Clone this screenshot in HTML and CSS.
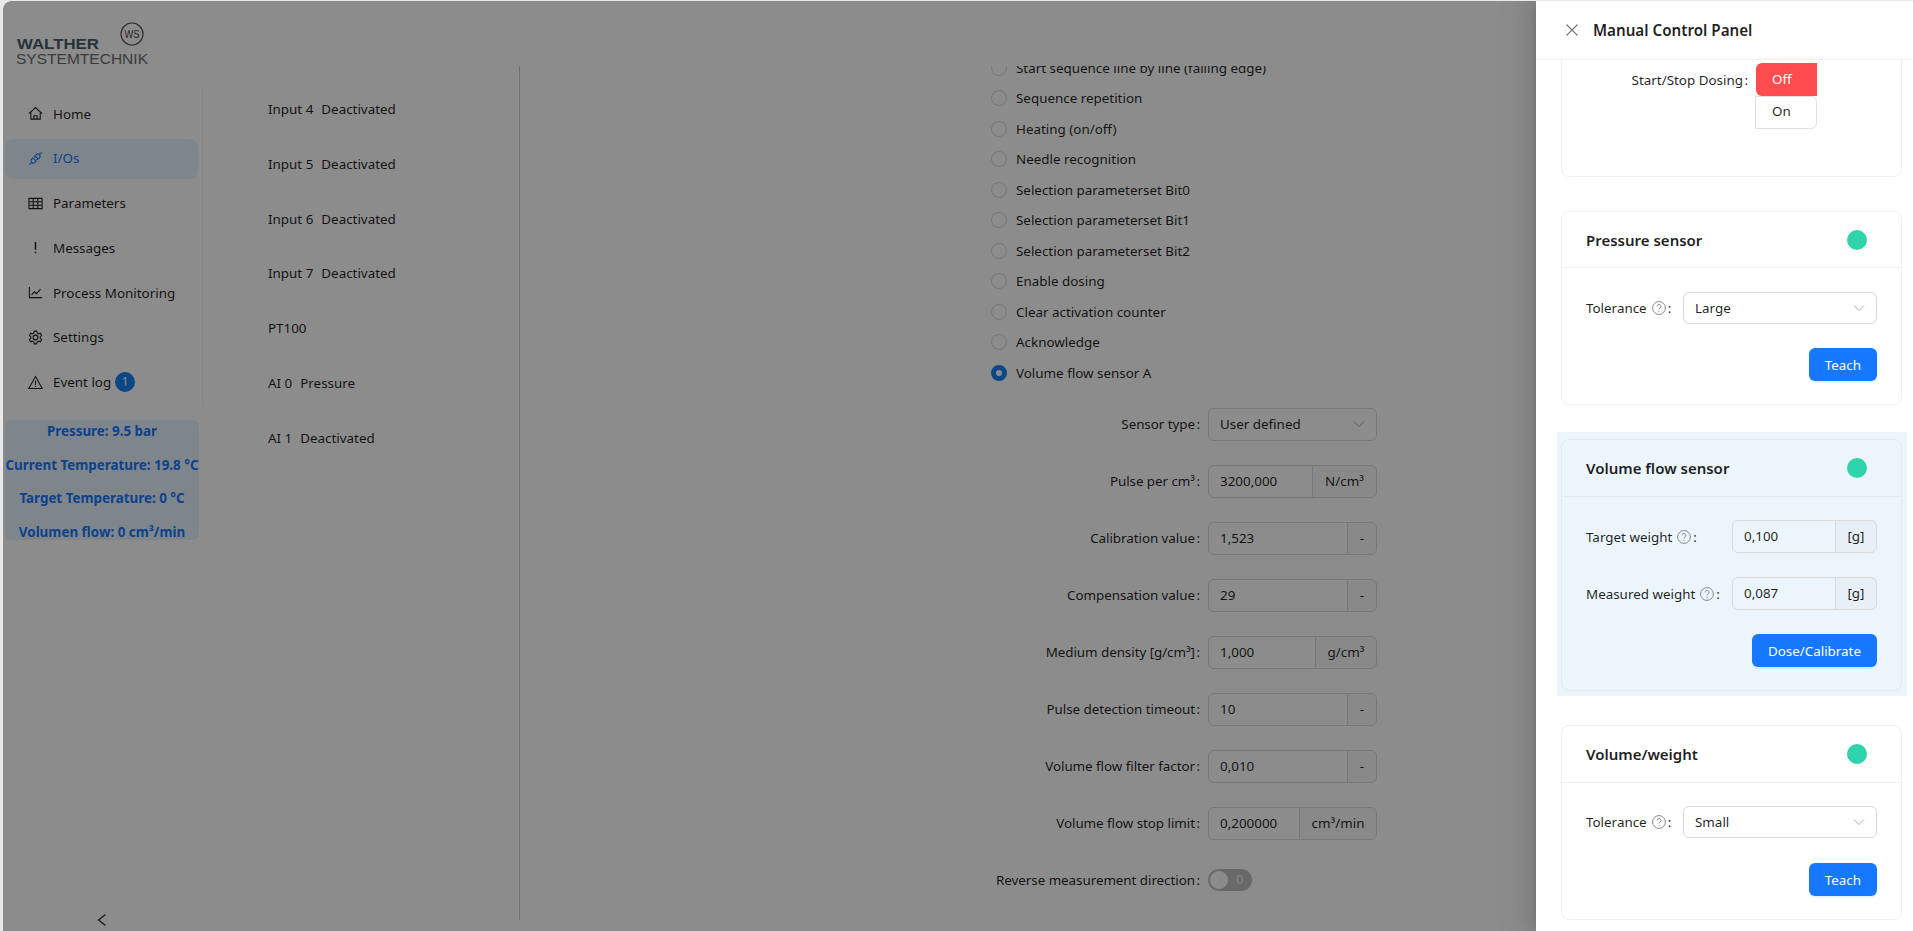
FILE: index.html
```html
<!DOCTYPE html>
<html lang="en">
<head>
<meta charset="utf-8">
<title>Manual Control Panel</title>
<link rel="stylesheet" href="styles.css">
</head>
<body>
<div class="frame">
<div class="app">
  <aside class="sidebar">
    <div class="logo">
      <svg width="150" height="70" viewBox="0 0 150 70">
        <circle class="logo-ring" cx="129" cy="33" r="11"/>
        <text class="logo-ws" x="129" y="37" text-anchor="middle" textLength="15" lengthAdjust="spacingAndGlyphs">WS</text>
        <text class="logo-a" x="14" y="48" textLength="82" lengthAdjust="spacingAndGlyphs">WALTHER</text>
        <text class="logo-b" x="13" y="63" textLength="132" lengthAdjust="spacingAndGlyphs">SYSTEMTECHNIK</text>
      </svg>
    </div>
    <nav class="nav">
      <a class="nav-item">
        <svg class="icon" viewBox="0 0 16 16"><path d="M1 8.2 8 1.6l7 6.6M3 7v7h10V7M6.3 14v-3.6h3.4V14"/></svg>
        <span>Home</span>
      </a>
      <a class="nav-item active">
        <svg class="icon" viewBox="0 0 16 16"><path d="M1.5 14.5l2.2-2.2M14.5 1.5l-2.2 2.2M5.2 7.4 3.9 8.7a2.4 2.4 0 0 0 3.4 3.4l1.3-1.3zM10.8 8.6l1.3-1.3a2.4 2.4 0 0 0-3.4-3.4L7.4 5.2zM6.4 6.8 8 5.2M9.2 9.6l1.6-1.6"/></svg>
        <span>I/Os</span>
      </a>
      <a class="nav-item">
        <svg class="icon" viewBox="0 0 16 16"><path d="M1 2.5h14v11H1zM1 6.2h14M1 9.8h14M5.6 2.5v11M10.4 2.5v11"/></svg>
        <span>Parameters</span>
      </a>
      <a class="nav-item">
        <svg class="icon icon-bold" viewBox="0 0 16 16"><path d="M8 2v8.5M8 12.6v1.6"/></svg>
        <span>Messages</span>
      </a>
      <a class="nav-item">
        <svg class="icon" viewBox="0 0 16 16"><path d="M1.5 2v11.5h13.5M3.8 10.5l3-3.2 2.2 2 4.4-4.8"/></svg>
        <span>Process Monitoring</span>
      </a>
      <a class="nav-item">
        <svg class="icon" viewBox="0 0 16 16"><circle cx="8" cy="8" r="2.5"/><path d="M6.7 1.2h2.6l.4 2 1.5.9 2-.7 1.3 2.3-1.5 1.4v1.8l1.5 1.4-1.3 2.3-2-.7-1.5.9-.4 2H6.7l-.4-2-1.5-.9-2 .7-1.3-2.3 1.5-1.4V7.1L1.5 5.7l1.3-2.3 2 .7 1.5-.9z"/></svg>
        <span>Settings</span>
      </a>
      <a class="nav-item">
        <svg class="icon" viewBox="0 0 16 16"><path d="M8 1.6 15.2 14.4H.8zM8 6v4.6M8 11.6v1.3"/></svg>
        <span>Event log</span><span class="badge">1</span>
      </a>
    </nav>
    <div class="status">
      <p>Pressure: 9.5 bar</p>
      <p>Current Temperature: 19.8 °C</p>
      <p>Target Temperature: 0 °C</p>
      <p>Volumen flow: 0 cm³/min</p>
    </div>
    <button class="collapse" type="button">
      <svg width="10" height="14" viewBox="0 0 10 14"><path d="M8.5 1.5 1.5 7l7 5.5"/></svg>
    </button>
  </aside>

  <section class="channels">
    <div class="channel"><span>Input 4</span><span>Deactivated</span></div>
    <div class="channel"><span>Input 5</span><span>Deactivated</span></div>
    <div class="channel"><span>Input 6</span><span>Deactivated</span></div>
    <div class="channel"><span>Input 7</span><span>Deactivated</span></div>
    <div class="channel"><span>PT100</span></div>
    <div class="channel"><span>AI 0</span><span>Pressure</span></div>
    <div class="channel"><span>AI 1</span><span>Deactivated</span></div>
  </section>

  <main class="main">
    <div class="radios">
      <label class="radio"><i class="radio-dot"></i>Start sequence line by line (falling edge)</label>
      <label class="radio"><i class="radio-dot"></i>Sequence repetition</label>
      <label class="radio"><i class="radio-dot"></i>Heating (on/off)</label>
      <label class="radio"><i class="radio-dot"></i>Needle recognition</label>
      <label class="radio"><i class="radio-dot"></i>Selection parameterset Bit0</label>
      <label class="radio"><i class="radio-dot"></i>Selection parameterset Bit1</label>
      <label class="radio"><i class="radio-dot"></i>Selection parameterset Bit2</label>
      <label class="radio"><i class="radio-dot"></i>Enable dosing</label>
      <label class="radio"><i class="radio-dot"></i>Clear activation counter</label>
      <label class="radio"><i class="radio-dot"></i>Acknowledge</label>
      <label class="radio"><i class="radio-dot checked"></i>Volume flow sensor A</label>
    </div>
    <div class="form">
      <div class="form-label">Sensor type<b>:</b></div>
      <div class="select tall"><span>User defined</span><svg class="chev" viewBox="0 0 12 8"><path d="M1 1.5 6 6.5l5-5"/></svg></div>

      <div class="form-label">Pulse per cm³<b>:</b></div>
      <div class="input-group"><span class="val">3200,000</span><span class="addon w-n">N/cm³</span></div>

      <div class="form-label">Calibration value<b>:</b></div>
      <div class="input-group"><span class="val">1,523</span><span class="addon w-d">-</span></div>

      <div class="form-label">Compensation value<b>:</b></div>
      <div class="input-group"><span class="val">29</span><span class="addon w-d">-</span></div>

      <div class="form-label">Medium density [g/cm³]<b>:</b></div>
      <div class="input-group"><span class="val">1,000</span><span class="addon w-g">g/cm³</span></div>

      <div class="form-label">Pulse detection timeout<b>:</b></div>
      <div class="input-group"><span class="val">10</span><span class="addon w-d">-</span></div>

      <div class="form-label">Volume flow filter factor<b>:</b></div>
      <div class="input-group"><span class="val">0,010</span><span class="addon w-d">-</span></div>

      <div class="form-label">Volume flow stop limit<b>:</b></div>
      <div class="input-group"><span class="val">0,200000</span><span class="addon w-c">cm³/min</span></div>

      <div class="form-label">Reverse measurement direction<b>:</b></div>
      <div class="toggle-cell"><div class="toggle"><i class="knob"></i><span>0</span></div></div>
    </div>
  </main>

  <div class="mask"></div>

  <aside class="drawer">
    <header class="drawer-head">
      <svg class="close" viewBox="0 0 12 12"><path d="M.5.5l11 11M11.5.5l-11 11"/></svg>
      <h2>Manual Control Panel</h2>
    </header>
    <div class="drawer-body">
      <section class="card card-clipped">
        <div class="dosing">
          <div class="dosing-label">Start/Stop Dosing<b>:</b></div>
          <div class="dosing-btns">
            <span class="seg seg-off">Off</span>
            <span class="seg seg-on">On</span>
          </div>
        </div>
      </section>

      <section class="card">
        <div class="card-head"><h3>Pressure sensor</h3><i class="led"></i></div>
        <div class="card-body">
          <div class="field">
            <div class="field-label w-tol">Tolerance<svg class="help" viewBox="0 0 14 14"><circle cx="7" cy="7" r="6.4"/><path d="M5.1 5.4a1.9 1.9 0 1 1 2.9 1.6c-.7.4-1 .8-1 1.5M7 9.9v1"/></svg><b>:</b></div>
            <div class="select grow"><span>Large</span><svg class="chev" viewBox="0 0 12 8"><path d="M1 1.5 6 6.5l5-5"/></svg></div>
          </div>
          <div class="actions"><button class="btn" type="button">Teach</button></div>
        </div>
      </section>

      <div class="highlight">
        <section class="card card-flow">
          <div class="card-head"><h3>Volume flow sensor</h3><i class="led"></i></div>
          <div class="card-body">
            <div class="field">
              <div class="field-label w-wgt">Target weight<svg class="help" viewBox="0 0 14 14"><circle cx="7" cy="7" r="6.4"/><path d="M5.1 5.4a1.9 1.9 0 1 1 2.9 1.6c-.7.4-1 .8-1 1.5M7 9.9v1"/></svg><b>:</b></div>
              <div class="input-group grow"><span class="val">0,100</span><span class="addon w-u">[g]</span></div>
            </div>
            <div class="field field-next">
              <div class="field-label w-wgt">Measured weight<svg class="help" viewBox="0 0 14 14"><circle cx="7" cy="7" r="6.4"/><path d="M5.1 5.4a1.9 1.9 0 1 1 2.9 1.6c-.7.4-1 .8-1 1.5M7 9.9v1"/></svg><b>:</b></div>
              <div class="input-group grow"><span class="val">0,087</span><span class="addon w-u">[g]</span></div>
            </div>
            <div class="actions"><button class="btn" type="button">Dose/Calibrate</button></div>
          </div>
        </section>
      </div>

      <section class="card card-weight">
        <div class="card-head"><h3>Volume/weight</h3><i class="led"></i></div>
        <div class="card-body">
          <div class="field">
            <div class="field-label w-tol">Tolerance<svg class="help" viewBox="0 0 14 14"><circle cx="7" cy="7" r="6.4"/><path d="M5.1 5.4a1.9 1.9 0 1 1 2.9 1.6c-.7.4-1 .8-1 1.5M7 9.9v1"/></svg><b>:</b></div>
            <div class="select grow"><span>Small</span><svg class="chev" viewBox="0 0 12 8"><path d="M1 1.5 6 6.5l5-5"/></svg></div>
          </div>
          <div class="actions"><button class="btn" type="button">Teach</button></div>
        </div>
      </section>
    </div>
  </aside>
</div>
</div>
</body>
</html>
```

FILE: styles.css
```css
* { box-sizing: border-box; }
html, body { margin: 0; height: 100%; }
body {
  font-family: "Noto Sans", "Open Sans", sans-serif;
  font-size: 13.4px;
  color: rgba(0, 0, 0, .88);
  overflow: hidden;
}
p, h2, h3 { margin: 0; }
b { font-weight: 400; }

.frame { height: 931px; padding: 1px 0 0 3px; background: #e9e9e9; overflow: hidden; }
.app { position: relative; display: flex; height: 930px; background: #fff; border-top-left-radius: 8px; overflow: hidden; }

/* sidebar */
.sidebar { display: flex; flex-direction: column; width: 200px; flex: none; }
.logo { height: 87px; flex: none; }
.logo svg { display: block; }
.logo-ring { fill: none; stroke: #555; stroke-width: 1.2; }
.logo-ws { font: 10px "Liberation Sans", sans-serif; fill: #444; }
.logo-a { font: 700 15px "Liberation Sans", sans-serif; fill: #465c6e; }
.logo-b { font: 15px "Liberation Sans", sans-serif; fill: #6c6c6c; }

.nav { border-right: 1px solid rgba(5, 5, 5, .06); padding: 6px 0 3px 2px; display: flex; flex-direction: column; gap: 4.75px; }
.nav-item { display: flex; align-items: center; height: 40px; width: 193px; padding: 0 0 1px 23px; border-radius: 8px; }
.nav-item.active { background: #e6f4ff; color: #1677ff; }
.icon { width: 15px; height: 15px; flex: none; margin-right: 10px; fill: none; stroke: currentColor; stroke-width: 1.15; }
.icon-bold { stroke-width: 1.6; }
.badge {
  width: 20px; height: 20px; margin-left: 4px; border-radius: 50%;
  background: #1580f5; color: #fff; font-size: 12px; line-height: 20px; text-align: center;
}

.status {
  width: 194px; height: 120px; margin: 14.5px 0 0 2px; padding-top: 1px;
  border-radius: 6px; background: #e6f4ff; color: #1677ff;
  font-weight: 700; text-align: center; white-space: nowrap;
}
.status p { line-height: 20px; margin-bottom: 13.5px; }

.collapse {
  width: 197px; margin-top: auto; margin-bottom: 4px; padding: 0;
  border: 0; background: none; display: flex; justify-content: center;
}
.collapse svg { fill: none; stroke: #222; stroke-width: 1.2; }

/* channel list */
.channels { width: 316px; flex: none; padding: 97px 0 0 65px; display: flex; flex-direction: column; gap: 32.8px; }
.channel { display: flex; gap: 8px; line-height: 22px; height: 22px; }

/* main */
.main { flex: 1; height: 854px; margin-top: 65px; border-left: 1px solid rgba(5, 5, 5, .2); overflow: hidden; }
.radios { margin-top: -13.5px; padding-left: 471px; }
.radio { display: flex; align-items: center; height: 30.5px; }
.radio-dot { width: 16px; height: 16px; margin-right: 9px; border: 1px solid #d9d9d9; border-radius: 50%; background: #fff; flex: none; }
.radio-dot.checked { border: 5px solid #1580f5; }

.form { display: grid; grid-template-columns: 680px 169px; column-gap: 8px; row-gap: 24px; margin-top: 19.5px; }
.form-label { display: flex; justify-content: flex-end; align-items: center; height: 33px; letter-spacing: -.05px; }
.form-label b { margin-left: 1.5px; }

.select {
  position: relative; display: flex; align-items: center; height: 32px;
  padding: 0 11px; border: 1px solid #d9d9d9; border-radius: 6px; background: #fff;
}
.select.tall { height: 33px; }
.chev { position: absolute; right: 11px; top: 11px; width: 12px; height: 8px; fill: none; stroke: #aaa; stroke-width: 1; }

.input-group { display: flex; height: 33px; border: 1px solid #d9d9d9; border-radius: 6px; background: #fff; }
.val { flex: 1; min-width: 0; padding: 0 11px; line-height: 31px; }
.addon { flex: none; text-align: center; line-height: 31px; border-left: 1px solid #d9d9d9; background: rgba(0, 0, 0, .02); border-radius: 0 5px 5px 0; }
.w-n { width: 64px; }
.w-d { width: 29px; }
.w-g { width: 61px; }
.w-c { width: 77px; }
.w-u { width: 41px; }

.toggle-cell { display: flex; align-items: center; height: 33px; }
.toggle { position: relative; width: 44px; height: 22px; border-radius: 11px; background: rgba(0, 0, 0, .25); }
.knob { position: absolute; left: 2px; top: 2px; width: 18px; height: 18px; border-radius: 50%; background: #fff; }
.toggle span { position: absolute; right: 9px; top: 0; line-height: 22px; font-size: 12px; color: rgba(255, 255, 255, .8); }

/* overlay */
.mask { position: absolute; inset: 0; background: rgba(0, 0, 0, .45); border-top-left-radius: 8px; }

/* drawer */
.drawer {
  position: absolute; top: 0; right: 0; bottom: 0; width: 377px;
  display: flex; flex-direction: column; background: #fff;
  box-shadow: -6px 0 16px rgba(0, 0, 0, .08), -3px 0 6px -4px rgba(0, 0, 0, .12), -9px 0 28px 8px rgba(0, 0, 0, .05);
}
.drawer-head { display: flex; align-items: center; height: 59px; flex: none; padding-left: 30px; border-bottom: 1px solid #f0f0f0; }
.close { width: 12px; height: 12px; margin-right: 15px; fill: none; stroke: #777; stroke-width: 1.1; }
.drawer-head h2 { font-size: 15.2px; font-weight: 600; }
.drawer-body { flex: 1; padding: 0 11px 0 25px; display: flex; flex-direction: column; gap: 34px; overflow: hidden; }

.card { flex: none; border: 1px solid #f0f0f0; border-radius: 8px; }
.card-clipped { height: 117px; border-top: 0; border-radius: 0 0 8px 8px; }
.card-head { display: flex; justify-content: space-between; align-items: center; height: 56px; padding: 0 34px 0 24px; border-bottom: 1px solid #f0f0f0; }
.card-head h3 { font-size: 15px; font-weight: 600; }
.led { width: 20px; height: 20px; border-radius: 50%; background: #2fd4aa; }
.card-body { padding: 24px 24px 23px; }

.dosing { display: flex; padding-top: 3px; }
.dosing-label { width: 186px; height: 33px; display: flex; justify-content: flex-end; align-items: center; }
.dosing-label b { margin-left: 1.5px; }
.dosing-btns { display: flex; flex-direction: column; margin-left: 7px; width: 62px; }
.seg { height: 33px; line-height: 32px; }
.seg-off { margin-left: 1px; padding-left: 16px; background: #ff4d4f; color: #fff; border-radius: 6px 0 0 6px; }
.seg-on { padding-left: 16px; border: 1px solid #e0e0e0; border-radius: 0 6px 6px 0; line-height: 29px; }

.field { display: flex; align-items: center; }
.field-next { margin-top: 24px; }
.field-label { display: flex; align-items: center; flex: none; height: 32px; }
.field-label b { margin-left: 2px; }
.w-tol { width: 97px; }
.w-wgt { width: 146px; }
.grow { flex: 1; min-width: 0; }
.help { width: 14px; height: 14px; margin-left: 5px; fill: none; stroke: #888; stroke-width: 1; }

.actions { display: flex; justify-content: flex-end; margin-top: 24px; }
.btn {
  height: 33px; padding: 0 16px; border: 0; border-radius: 6px;
  background: #1677ff; color: #fff; font: inherit;
  box-shadow: 0 2px 0 rgba(5, 145, 255, .1);
}

.highlight { flex: none; margin: -7px -5px -5px -4px; padding: 7px 5px 5px 4px; background: #ebf5fb; }
.card-flow { border-color: #e3ebf1; }
.card-flow .card-head { height: 57px; border-bottom-color: #e3ebf1; }
.card-flow .card-body { padding-top: 23px; }
.card-flow .input-group { background: transparent; }
.card-weight .card-head { height: 57px; }
.card-weight .card-body { padding-top: 23px; }
.card-weight .actions { margin-top: 25px; }
```
